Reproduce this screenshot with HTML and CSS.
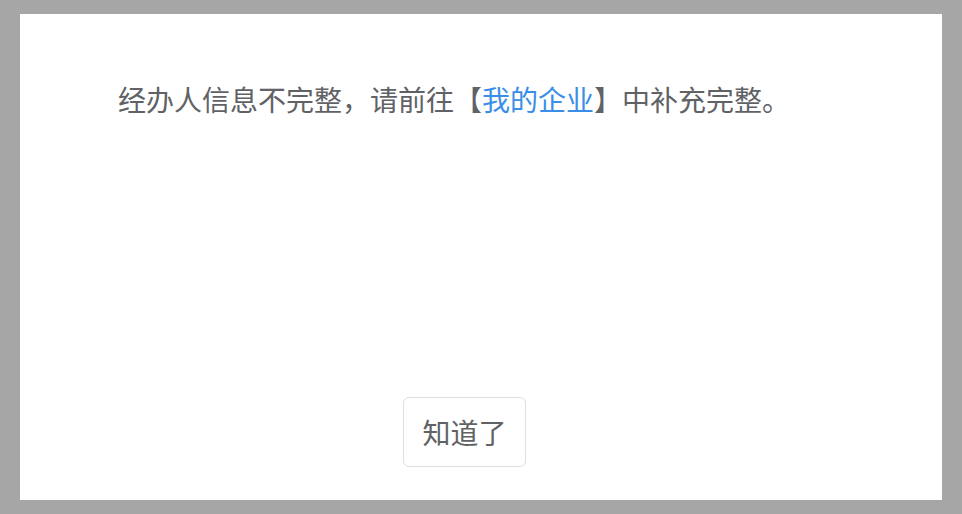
FILE: index.html
```html
<!DOCTYPE html>
<html lang="zh-CN">
<head>
    <meta charset="UTF-8">
    <meta name="viewport" content="width=device-width, initial-scale=1.0">
    <title>提示</title>
    <link rel="stylesheet" href="styles.css">
</head>
<body>
    <div class="dialog">
        <p class="message">经办人信息不完整，请前往【<a href="#" class="link">我的企业</a>】中补充完整。</p>
        <div class="footer">
            <button class="btn">知道了</button>
        </div>
    </div>
</body>
</html>
```

FILE: styles.css
```css
html, body {
    margin: 0;
    height: 100%;
}
body {
    background: #a6a6a6;
    padding: 14px 20px;
    box-sizing: border-box;
    font-family: "Noto Sans CJK SC", "Noto Sans", sans-serif;
    color: #606266;
}
.dialog {
    background: #fff;
    height: 486px;
    display: flex;
    flex-direction: column;
    box-sizing: border-box;
    padding: 65px 0 33px 98px;
}
.message {
    margin: 0;
    font-size: 28px;
    line-height: 40px;
    flex: 1;
}
.link {
    color: #3a8ee8;
    text-decoration: none;
}
.footer {
    display: flex;
    padding-left: 285px;
}
.btn {
    width: 123px;
    height: 70px;
    padding: 0;
    background: #fff;
    border: 1px solid #dcdfe6;
    border-radius: 6px;
    font-family: inherit;
    font-size: 28px;
    color: #606266;
    cursor: pointer;
}
```
